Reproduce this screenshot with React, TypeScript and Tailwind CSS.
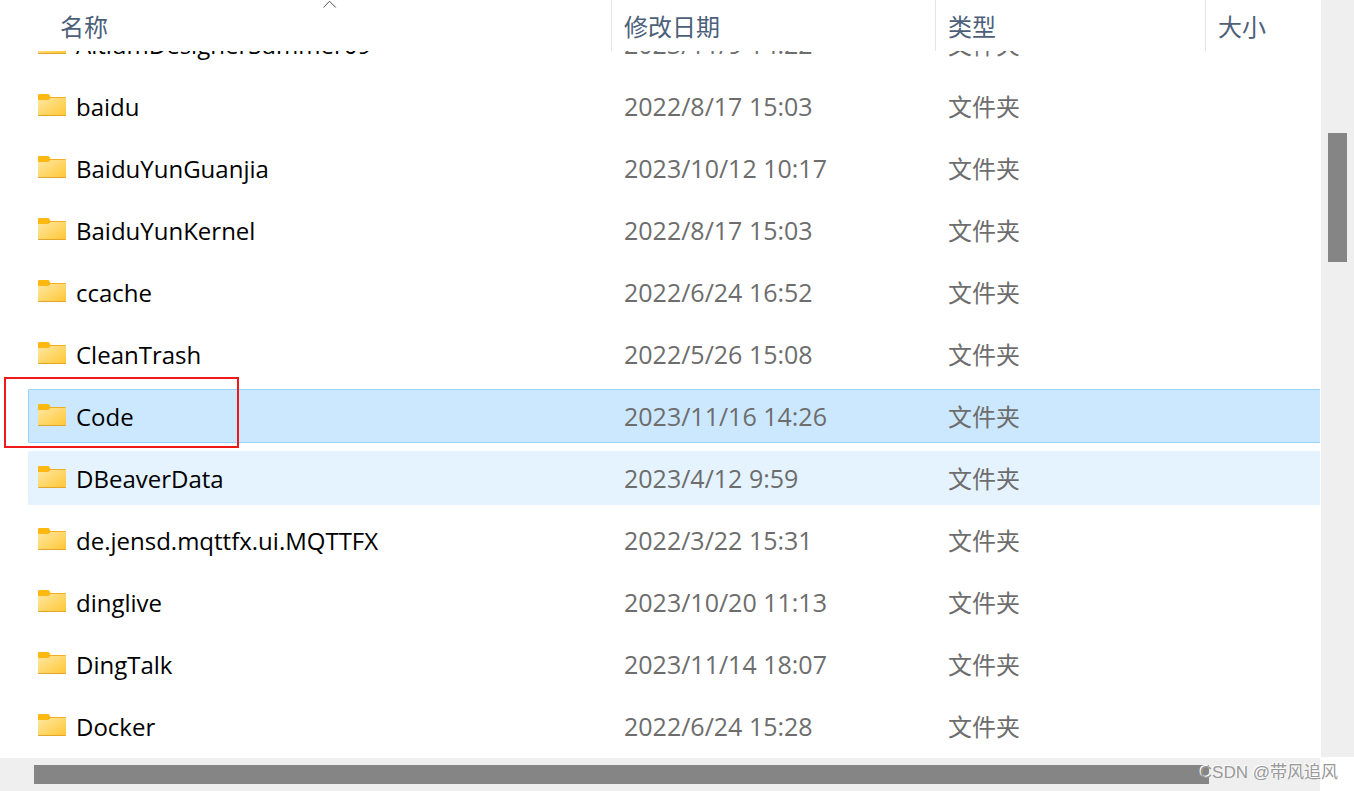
import { useLayoutEffect, useRef } from 'react';
import clsx from 'clsx';

type Row = {
  name: string;
  modified: string;
  state?: 'selected' | 'hover';
};

const rows: Row[] = [
  { name: 'AltiumDesignerSummer09', modified: '2023/11/9 14:22' },
  { name: 'baidu', modified: '2022/8/17 15:03' },
  { name: 'BaiduYunGuanjia', modified: '2023/10/12 10:17' },
  { name: 'BaiduYunKernel', modified: '2022/8/17 15:03' },
  { name: 'ccache', modified: '2022/6/24 16:52' },
  { name: 'CleanTrash', modified: '2022/5/26 15:08' },
  { name: 'Code', modified: '2023/11/16 14:26', state: 'selected' },
  { name: 'DBeaverData', modified: '2023/4/12 9:59', state: 'hover' },
  { name: 'de.jensd.mqttfx.ui.MQTTFX', modified: '2022/3/22 15:31' },
  { name: 'dinglive', modified: '2023/10/20 11:13' },
  { name: 'DingTalk', modified: '2023/11/14 18:07' },
  { name: 'Docker', modified: '2022/6/24 15:28' },
];

const columns = [
  { label: '名称', width: 'w-[584px]', pad: 'pl-8' },
  { label: '修改日期', width: 'w-[324px]', pad: 'pl-3' },
  { label: '类型', width: 'w-[270px]', pad: 'pl-3' },
  { label: '大小', width: '', pad: 'pl-3' },
];

function FolderIcon() {
  return (
    <svg width="28" height="22" viewBox="0 0 28 22" className="mb-0.5 shrink-0" aria-hidden="true">
      <defs>
        <linearGradient id="folder" x1="0" y1="0" x2="1" y2="1">
          <stop offset="0" stopColor="#ffe8a3" />
          <stop offset="1" stopColor="#ffc632" />
        </linearGradient>
      </defs>
      <path d="M0 1.5Q0 0 1.5 0H9.5Q10.5 0 11 .8L12.5 3H27Q28 3 28 4V8H0Z" fill="#f0ae20" />
      <path d="M0 1.5Q0 0 1.5 0H9.5Q10.5 0 11 .8L12.3 3L10 6H0Z" fill="#fdb912" />
      <path d="M0 6H9.5Q10.6 6 11.3 5.2L12.5 4H28V21Q28 22 27 22H1Q0 22 0 21Z" fill="url(#folder)" />
      <path d="M0 21H28Q28 22 27 22H1Q0 22 0 21Z" fill="#e3a52c" />
    </svg>
  );
}

function cellClass(state: Row['state'], edge?: 'first') {
  return clsx(
    'flex h-[54px] items-center border-y',
    edge === 'first' && 'rounded-l-xs border-l',
    state === 'selected' && 'border-[#99d1ff] bg-[#cce8ff]',
    state === 'hover' && 'border-[#e5f3ff] bg-[#e5f3ff]',
    !state && 'border-transparent',
  );
}

function FileRow({ name, modified, state }: Row) {
  return (
    <tr aria-selected={state === 'selected'}>
      <td className="relative py-1">
        <div className={clsx(cellClass(state, 'first'), 'gap-2.5 pl-[9px]')}>
          <FolderIcon />
          <span className="pt-0.5 text-2xl text-black">{name}</span>
        </div>
        {state === 'selected' && (
          <span className="pointer-events-none absolute -top-2 -left-6 h-[71px] w-[235px] border-2 border-[#f01818]" />
        )}
      </td>
      <td className="py-1">
        <div className={clsx(cellClass(state), 'pt-0.5 pl-3 text-[25px]')}>{modified}</div>
      </td>
      <td className="py-1">
        <div className={clsx(cellClass(state), 'pt-0.5 pl-3 text-2xl')}>文件夹</div>
      </td>
      <td className="py-1">
        <div className={cellClass(state)} />
      </td>
    </tr>
  );
}

export default function App() {
  const listRef = useRef<HTMLDivElement>(null);

  useLayoutEffect(() => {
    if (listRef.current) listRef.current.scrollTop = 38;
  }, []);

  return (
    <div className="relative flex h-screen flex-col overflow-hidden bg-white font-['Open_Sans','Noto_Sans_CJK_SC',sans-serif]">
      <div className="flex min-h-0 flex-1">
        <div ref={listRef} className="min-w-0 flex-1 overflow-hidden pr-px pl-7">
          <table className="w-full table-fixed border-separate border-spacing-0 text-left whitespace-nowrap text-[#6d6d6d]">
            <thead className="sticky top-0 z-10 bg-white">
              <tr>
                {columns.map(({ label, width, pad }, i) => (
                  <th
                    key={label}
                    scope="col"
                    aria-sort={i === 0 ? 'ascending' : undefined}
                    className={clsx('relative h-[51px] border-[#e5e5e5] p-0 font-normal', width, i < 3 && 'border-r')}
                  >
                    <button type="button" className={clsx('flex h-[51px] w-full items-center pt-0.5 text-2xl text-[#4c607a]', pad)}>
                      {label}
                    </button>
                    {i === 0 && (
                      <svg
                        className="absolute top-0 left-[295px]"
                        width="14"
                        height="9"
                        viewBox="0 0 14 9"
                        fill="none"
                        stroke="#555"
                        aria-hidden="true"
                      >
                        <path d="M.5 7.5L6.5 1.2L12.7 7.5" />
                      </svg>
                    )}
                  </th>
                ))}
              </tr>
            </thead>
            <tbody>
              {rows.map((row) => (
                <FileRow key={row.name} {...row} />
              ))}
            </tbody>
          </table>
        </div>
        <div className="w-[33px] bg-[#efefef] px-[7px] pt-[133px]">
          <div className="h-[129px] bg-[#858585]" />
        </div>
      </div>
      <div className="mt-px mr-[34px] h-[33px] bg-[#efefef] py-[7px] pr-[111px] pl-[34px]">
        <div className="h-[19px] bg-[#858585]" />
      </div>
      <span className="absolute right-4 bottom-1.5 font-['Liberation_Sans','Noto_Sans_CJK_SC',sans-serif] text-[17px] leading-6 text-[#999] [text-shadow:-1px_-1px_0_#fff]">
        CSDN @带风追风
      </span>
    </div>
  );
}
